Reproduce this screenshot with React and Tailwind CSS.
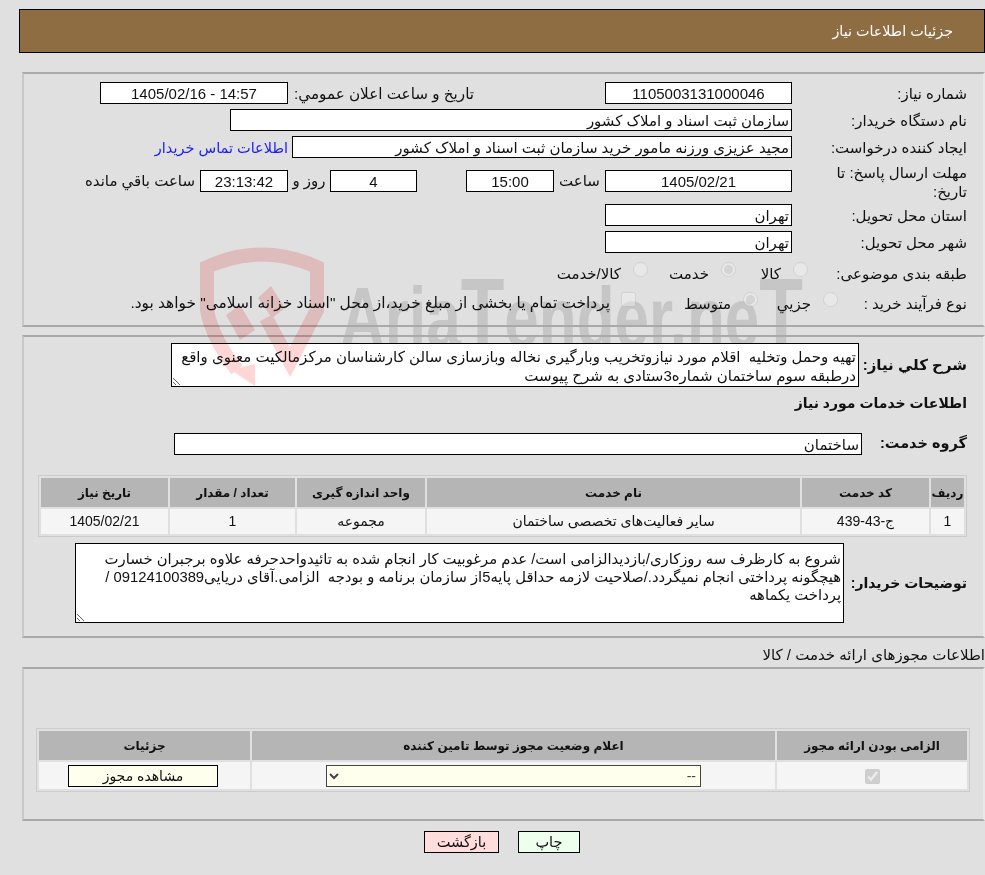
const Box = ({ className = '', children }) => (
  <div className={`h-[22px] border border-black bg-white px-[2px] leading-[21px] whitespace-nowrap ${className}`}>{children}</div>
);

const Label = ({ children }) => (
  <div className="w-[175px] shrink-0 pl-2 pt-[1px] leading-[22px]">{children}</div>
);

// site name stamp, behind the page
function Wordmark() {
  return (
    <div dir="ltr" className="absolute left-[340px] top-[240px] z-0">
      <svg width="480" height="120" viewBox="0 0 480 120">
        <text x="0" y="107" textLength="463" lengthAdjust="spacingAndGlyphs" fontFamily="'Liberation Sans', sans-serif" fontWeight="700" fontSize="85" fill="#c6c6c6">Aria<tspan fontSize="98">T</tspan>ender.ne<tspan fontSize="98">T</tspan></text>
      </svg>
    </div>
  );
}

// shield logo, sits over the page and tints the textarea too
function Shield() {
  return (
    <div className="absolute left-[190px] top-[240px] z-20 pointer-events-none mix-blend-multiply">
      <svg width="150" height="160" viewBox="0 0 150 160">
        <path d="M47 130 Q22 98 17 70 V27 Q72 2 127 27 V70 L100 122 L76 78" fill="none" stroke="#fed6d6" strokeWidth="14" />
        <path d="M36 75 L50 65 L65 90 L50 100 Z M68 58 L81 46 L95 68 L82 78 Z M41 130 L65 146 L65 124 Z" fill="#fed6d6" />
      </svg>
    </div>
  );
}

function Panel({ className = '', children }) {
  return <div className={`ml-[21px] w-[963px] border-2 border-t-[#a9a9a9] border-l-[#c8c8c8] border-b-[#a9a9a9] border-r-[#e8e8e8] ${className}`}>{children}</div>;
}

const Radio = ({ checked, label, className = '' }) => (
  <label className={`flex items-center ${className}`}>
    <input type="radio" disabled defaultChecked={checked} className="w-[15px] h-[15px] -mt-[8px] opacity-60" />
    <span className="mr-[12px] mt-[2px]">{label}</span>
  </label>
);

export default function App() {
  return (
    <div dir="rtl" className="relative w-[985px] h-[875px] overflow-hidden bg-[#e0e0e0] text-[15px] text-[#111] font-['Liberation_Sans','DejaVu_Sans',sans-serif]">
      <Wordmark />
      <div className="relative z-10">
        <div className="h-[9px]" />
        <div className="ml-[19px] h-[44px] border border-black bg-[#8d6d41] pr-[31px] text-[14.3px] leading-[42px] text-white">جزئیات اطلاعات نیاز</div>

        <Panel className="mt-[19px] h-[255px] pt-[8px] pr-[16px]">
          <div className="flex h-[22px]">
            <Label>شماره نیاز:</Label>
            <Box className="w-[187px] text-center">1105003131000046</Box>
            <div className="mr-[131px] w-[186px] shrink-0 pt-[1px] text-[15.2px] leading-[22px]">تاریخ و ساعت اعلان عمومي:</div>
            <Box className="w-[188px] text-center"><span dir="ltr">1405/02/16 - 14:57</span></Box>
          </div>
          <div className="flex h-[22px] mt-[5px]">
            <Label>نام دستگاه خریدار:</Label>
            <Box className="w-[562px]">سازمان ثبت اسناد و املاک کشور</Box>
          </div>
          <div className="flex h-[22px] mt-[5px]">
            <Label>ایجاد کننده درخواست:</Label>
            <Box className="w-[500px]">مجید عزیزی ورزنه مامور خرید سازمان ثبت اسناد و املاک کشور</Box>
            <a className="mr-[4px] pt-[1px] text-[14.5px] leading-[22px] text-[#1a1aff] whitespace-nowrap">اطلاعات تماس خریدار</a>
          </div>
          <div className="flex items-center h-[44px] mt-[1px]">
            <div className="w-[175px] shrink-0 pl-2 mt-[1px] leading-[19px]">مهلت ارسال پاسخ: تا تاریخ:</div>
            <Box className="w-[187px] text-center">1405/02/21</Box>
            <div className="w-[51px] shrink-0 text-center">ساعت</div>
            <Box className="w-[88px] text-center">15:00</Box>
            <div className="w-[49px] shrink-0" />
            <Box className="w-[87px] text-center">4</Box>
            <div className="w-[42px] shrink-0 text-center">روز و</div>
            <Box className="w-[88px] text-center bg-[#ffffee]">23:13:42</Box>
            <div className="mr-[5px] whitespace-nowrap">ساعت باقي مانده</div>
          </div>
          <div className="flex h-[22px] mt-[1px]">
            <Label>استان محل تحویل:</Label>
            <Box className="w-[187px]">تهران</Box>
          </div>
          <div className="flex h-[22px] mt-[5px]">
            <Label>شهر محل تحویل:</Label>
            <Box className="w-[187px]">تهران</Box>
          </div>
          <div className="flex h-[22px] mt-[9px]">
            <Label>طبقه بندی موضوعی:</Label>
            <div className="flex -mr-[16px]">
              <Radio label="کالا" className="w-[72px]" />
              <Radio checked label="خدمت" className="w-[88px]" />
              <Radio label="کالا/خدمت" />
            </div>
          </div>
          <div className="flex h-[22px] mt-[8px]">
            <Label>نوع فرآیند خرید :</Label>
            <div className="flex -mr-[46px]">
              <Radio label="جزیي" className="w-[80px]" />
              <Radio checked label="متوسط" className="w-[122px]" />
              <label className="flex items-center">
                <input type="checkbox" disabled className="w-[15px] h-[15px] -mt-[8px] opacity-60" />
                <span className="mr-[11px] text-[15.4px] whitespace-nowrap">پرداخت تمام یا بخشی از مبلغ خرید،از محل "اسناد خزانه اسلامی" خواهد بود.</span>
              </label>
            </div>
          </div>
        </Panel>

        <Panel className="mt-[8px] h-[303px] pt-[6px] pr-[16px]">
          <div className="flex items-center">
            <div className="w-[108px] shrink-0 font-bold whitespace-nowrap">شرح کلي نياز:</div>
            <textarea readOnly dir="rtl" defaultValue="تهیه وحمل وتخلیه  اقلام مورد نیازوتخریب وبارگیری نخاله وبازسازی سالن کارشناسان مرکزمالکیت معنوی واقع درطبقه سوم ساختمان شماره3ستادی به شرح پیوست" className="block h-[44px] w-[688px] border border-black bg-white px-[2px] pt-[3px] text-[15px] leading-[19px] outline-none overflow-hidden" />
          </div>
          <div className="mt-[5px] h-[22px] text-[14px] font-bold leading-[22px]">اطلاعات خدمات مورد نیاز</div>
          <div className="flex items-center mt-[19px]">
            <div className="w-[105px] shrink-0 text-[14.5px] font-bold whitespace-nowrap">گروه خدمت:</div>
            <Box className="w-[688px]">ساختمان</Box>
          </div>
          <table className="mt-[20px] w-[929px] table-fixed border border-[#cccccc] border-separate border-spacing-[2px] text-[12px]">
            <thead>
              <tr className="bg-[#b5b5b5] h-[29px] font-bold">
                <th className="w-[33px]">ردیف</th>
                <th className="w-[127px]">کد خدمت</th>
                <th className="w-[373px]">نام خدمت</th>
                <th className="w-[128px]">واحد اندازه گیری</th>
                <th className="w-[125px]">تعداد / مقدار</th>
                <th className="w-[127px]">تاریخ نیاز</th>
              </tr>
            </thead>
            <tbody>
              <tr className="bg-[#f5f5f5] h-[25px] text-center text-[14px]">
                <td>1</td>
                <td>ج-43-439</td>
                <td>سایر فعالیت‌های تخصصی ساختمان</td>
                <td>مجموعه</td>
                <td>1</td>
                <td>1405/02/21</td>
              </tr>
            </tbody>
          </table>
          <div className="flex items-center mt-[6px]">
            <div className="w-[123px] shrink-0 text-[14px] font-bold whitespace-nowrap">توضیحات خریدار:</div>
            <textarea readOnly dir="rtl" defaultValue="شروع به کارظرف سه روزکاری/بازدیدالزامی است/ عدم مرغوبیت کار انجام شده به تائیدواحدحرفه علاوه برجبران خسارت هیچگونه پرداختی انجام نمیگردد./صلاحیت لازمه حداقل پایه5از سازمان برنامه و بودجه  الزامی.آقای دریایی09124100389 / پرداخت یکماهه" className="block h-[80px] w-[769px] border border-black bg-white px-[2px] pt-[6px] text-[14.8px] leading-[18px] outline-none overflow-hidden" />
          </div>
        </Panel>

        <div className="mt-[6px] h-[22px] leading-[22px] whitespace-nowrap">اطلاعات مجوزهای ارائه خدمت / کالا</div>

        <Panel className="mt-[1px] h-[154px] pt-[59px] pr-[13px]">
          <table className="w-[934px] table-fixed border border-[#cccccc] border-separate border-spacing-[2px] text-[12px]">
            <thead>
              <tr className="bg-[#b5b5b5] h-[29px]">
                <th className="w-[190px]">الزامی بودن ارائه مجوز</th>
                <th className="w-[523px]">اعلام وضعیت مجوز توسط تامین کننده</th>
                <th className="w-[211px]">جزئیات</th>
              </tr>
            </thead>
            <tbody>
              <tr className="bg-[#f5f5f5] h-[27px] text-center">
                <td><input type="checkbox" disabled defaultChecked className="w-[15px] h-[15px] align-middle" /></td>
                <td>
                  <select dir="rtl" disabled className="block mx-auto w-[375px] h-[22px] border border-[#444] bg-[#ffffee] text-[14px] text-[#444] opacity-100"><option>--</option></select>
                </td>
                <td>
                  <button className="block mr-[32px] w-[150px] h-[22px] border border-black bg-[#ffffee] text-[14px]">مشاهده مجوز</button>
                </td>
              </tr>
            </tbody>
          </table>
        </Panel>

        <div className="flex justify-center gap-[19px] mt-[10px] pl-[19px]">
          <button className="w-[62px] h-[22px] border border-black bg-[#eeffee] text-[14.5px]">چاپ</button>
          <button className="w-[75px] h-[22px] border border-black bg-[#ffdddd] text-[14.5px]">بازگشت</button>
        </div>
      </div>
      <Shield />
    </div>
  );
}
